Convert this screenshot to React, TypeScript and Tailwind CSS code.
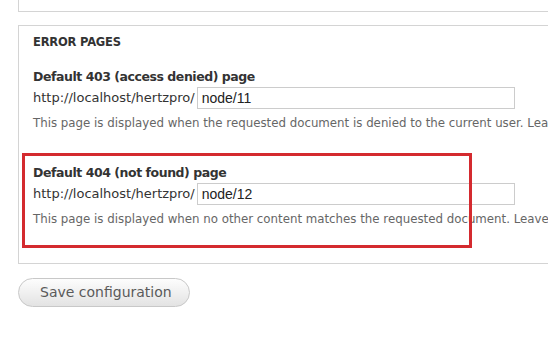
export default function App() {
  const font = { fontFamily: '"DejaVu Sans", Verdana, sans-serif' };
  return (
    <div className="w-[548px] h-[353px] overflow-hidden bg-white pl-[18px] text-[#333]" style={font}>
      {/* previous fieldset, cut off at top */}
      <div className="w-[600px] h-[12px] border-l border-b border-[#d4d4d4]" />

      <div className="relative mt-[13px] w-[600px] border border-r-0 border-[#d4d4d4] pl-[14px] pt-[8px] pb-[37px]">
        <div className="text-[11.5px] leading-[16px] font-bold uppercase tracking-[-0.2px] text-[#333]">Error pages</div>

        <div className="mt-[19px]">
          <div className="text-[12.5px] leading-[16px] font-bold tracking-[-0.45px] text-[#333]">Default 403 (access denied) page</div>
          <div className="mt-[2px] flex items-center text-[13px]">
            <span className="mr-[2px]">http://localhost/hertzpro/</span>
            <input
              readOnly
              value="node/11"
              className="h-[22px] w-[318px] border border-[#ccc] px-[4px] text-[14px] text-[#222] outline-none"
              style={{ fontFamily: '"Liberation Sans", Arial, sans-serif' }}
            />
          </div>
          <div className="mt-[7px] text-[11.8px] leading-[14px] whitespace-nowrap text-[#666]">
            This page is displayed when the requested document is denied to the current user. Leave blank to display a generic "access denied" page.
          </div>
        </div>

        <div className="mt-[35px]">
          <div className="text-[12.5px] leading-[16px] font-bold tracking-[-0.45px] text-[#333]">Default 404 (not found) page</div>
          <div className="mt-[2px] flex items-center text-[13px]">
            <span className="mr-[2px]">http://localhost/hertzpro/</span>
            <input
              readOnly
              value="node/12"
              className="h-[22px] w-[318px] border border-[#ccc] px-[4px] text-[14px] text-[#222] outline-none"
              style={{ fontFamily: '"Liberation Sans", Arial, sans-serif' }}
            />
          </div>
          <div className="mt-[7px] text-[11.8px] leading-[14px] whitespace-nowrap text-[#666]">
            This page is displayed when no other content matches the requested document. Leave blank to display a generic "page not found" page.
          </div>
        </div>

        {/* red annotation box */}
        <div className="absolute left-[3px] top-[127px] w-[450px] h-[95px] border-[3px] border-[#d42a2f] pointer-events-none" />
      </div>

      <button className="mt-[14px] h-[29px] w-[172px] rounded-full border border-[#c8c8c8] bg-gradient-to-b from-[#fdfdfd] to-[#e3e3e3] pl-[21px] text-left text-[14px] text-[#5a5a5a]">
        Save configuration
      </button>
    </div>
  );
}
